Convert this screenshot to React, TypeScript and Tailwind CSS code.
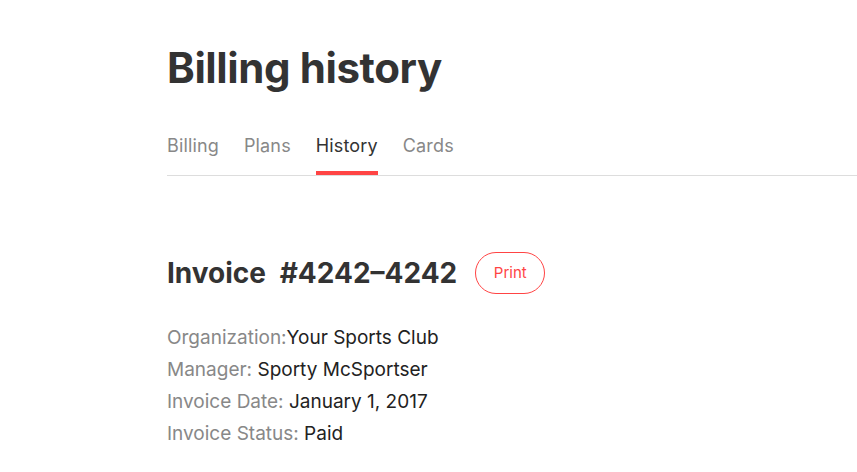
export default function App() {
  const tabs = ['Billing', 'Plans', 'History', 'Cards'];
  const rows = [
    { label: 'Organization:', value: 'Your Sports Club', space: false },
    { label: 'Manager:', value: 'Sporty McSportser', space: true },
    { label: 'Invoice Date:', value: 'January 1, 2017', space: true },
    { label: 'Invoice Status:', value: 'Paid', space: true },
  ];

  return (
    <div className="min-h-screen bg-white pl-[167px] font-['Inter',sans-serif] text-[#333]">
      <h1 className="pt-[40px] text-[42px] font-bold leading-[56px] tracking-[-0.4px]">Billing history</h1>

      {/* tabs */}
      <nav className="mt-[38px] flex gap-[25px] border-b border-[#ddd]">
        {tabs.map((t) => (
          <div
            key={t}
            className={
              t === 'History'
                ? 'border-b-[4px] border-[#f44] pb-[13px] text-[18px] leading-[24px] tracking-[0.15px] text-[#333]'
                : 'pb-[17px] text-[18px] leading-[24px] tracking-[0.15px] text-[#888]'
            }
          >
            {t}
          </div>
        ))}
      </nav>

      {/* invoice */}
      <div className="mt-[76px] flex h-[42px] items-center gap-[18px]">
        <h2 className="text-[28px] font-bold leading-[40px] [word-spacing:7px]">Invoice #4242–4242</h2>
        <button className="h-[42px] w-[70px] rounded-full border border-[#f44] text-[15px] text-[#f44]">
          Print
        </button>
      </div>

      <div className="mt-[28px] text-[19px] leading-[32px]">
        {rows.map((r) => (
          <div key={r.label}>
            <span className="text-[#888]">{r.label}</span>
            {r.space ? ' ' : ''}
            <span className="text-[#222]">{r.value}</span>
          </div>
        ))}
      </div>
    </div>
  );
}
